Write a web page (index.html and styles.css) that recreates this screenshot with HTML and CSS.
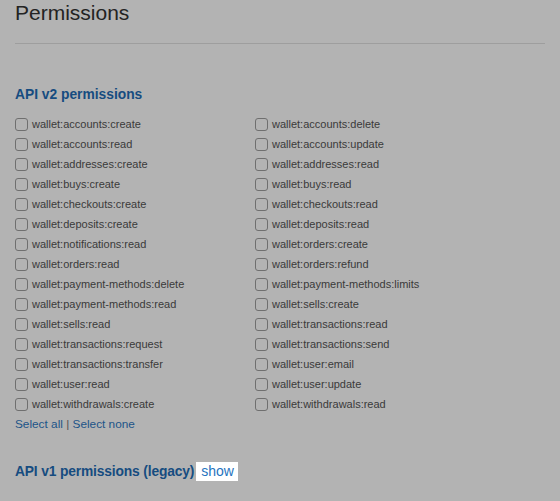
FILE: index.html
```html
<!DOCTYPE html>
<html>
<head>
<meta charset="utf-8">
<link rel="stylesheet" href="styles.css">
</head>
<body>
<div class="page">
  <h1 class="title">Permissions</h1>
  <hr class="divider">
  <h2 class="section-title">API v2 permissions</h2>
  <div class="perm-grid">
    <label class="perm"><span class="box"></span>wallet:accounts:create</label>
    <label class="perm"><span class="box"></span>wallet:accounts:delete</label>
    <label class="perm"><span class="box"></span>wallet:accounts:read</label>
    <label class="perm"><span class="box"></span>wallet:accounts:update</label>
    <label class="perm"><span class="box"></span>wallet:addresses:create</label>
    <label class="perm"><span class="box"></span>wallet:addresses:read</label>
    <label class="perm"><span class="box"></span>wallet:buys:create</label>
    <label class="perm"><span class="box"></span>wallet:buys:read</label>
    <label class="perm"><span class="box"></span>wallet:checkouts:create</label>
    <label class="perm"><span class="box"></span>wallet:checkouts:read</label>
    <label class="perm"><span class="box"></span>wallet:deposits:create</label>
    <label class="perm"><span class="box"></span>wallet:deposits:read</label>
    <label class="perm"><span class="box"></span>wallet:notifications:read</label>
    <label class="perm"><span class="box"></span>wallet:orders:create</label>
    <label class="perm"><span class="box"></span>wallet:orders:read</label>
    <label class="perm"><span class="box"></span>wallet:orders:refund</label>
    <label class="perm"><span class="box"></span>wallet:payment-methods:delete</label>
    <label class="perm"><span class="box"></span>wallet:payment-methods:limits</label>
    <label class="perm"><span class="box"></span>wallet:payment-methods:read</label>
    <label class="perm"><span class="box"></span>wallet:sells:create</label>
    <label class="perm"><span class="box"></span>wallet:sells:read</label>
    <label class="perm"><span class="box"></span>wallet:transactions:read</label>
    <label class="perm"><span class="box"></span>wallet:transactions:request</label>
    <label class="perm"><span class="box"></span>wallet:transactions:send</label>
    <label class="perm"><span class="box"></span>wallet:transactions:transfer</label>
    <label class="perm"><span class="box"></span>wallet:user:email</label>
    <label class="perm"><span class="box"></span>wallet:user:read</label>
    <label class="perm"><span class="box"></span>wallet:user:update</label>
    <label class="perm"><span class="box"></span>wallet:withdrawals:create</label>
    <label class="perm"><span class="box"></span>wallet:withdrawals:read</label>
  </div>
  <div class="select-links"><a class="link">Select all</a> <span class="sep">|</span> <a class="link">Select none</a></div>
  <h2 class="section-title legacy">API v1 permissions (legacy)<a class="show">show</a></h2>
</div>
</body>
</html>
```
FILE: styles.css
```css
html, body {
  margin: 0;
  padding: 0;
  background: #b3b3b3;
}
body {
  font-family: "Liberation Sans", Arial, Helvetica, sans-serif;
  color: #3a3a3a;
}
.page {
  padding: 0 15px;
  width: 530px;
}
.title {
  margin: 1px 0 0;
  font-size: 21px;
  line-height: 24px;
  font-weight: normal;
  color: #232323;
}
.divider {
  margin: 18px 0 0;
  border: 0;
  border-top: 1px solid #9e9e9e;
  height: 0;
}
.section-title {
  margin: 42px 0 0;
  font-size: 13.8px;
  line-height: 17px;
  font-weight: bold;
  color: #164c80;
}
.perm-grid {
  margin-top: 11px;
  display: grid;
  grid-template-columns: 240px 240px;
}
.perm {
  display: flex;
  align-items: center;
  height: 20px;
  font-size: 11px;
  line-height: 20px;
  color: #3a3a3a;
}
.box {
  width: 11px;
  height: 11px;
  border: 1px solid #6f6f6f;
  border-radius: 3px;
  margin-right: 4px;
  flex: none;
}
.select-links {
  font-size: 11.8px;
  line-height: 20px;
  color: #1c5488;
}
.link {
  color: #1c5488;
}
.sep {
  color: #555;
}
.legacy {
  margin-top: 28px;
  letter-spacing: -0.15px;
}
.show {
  display: inline-block;
  margin-left: 2px;
  background: #fff;
  color: #1f74c0;
  font-weight: normal;
  font-size: 14px;
  letter-spacing: 0;
  padding: 0 4px 0 5px;
  line-height: 19px;
}
```
